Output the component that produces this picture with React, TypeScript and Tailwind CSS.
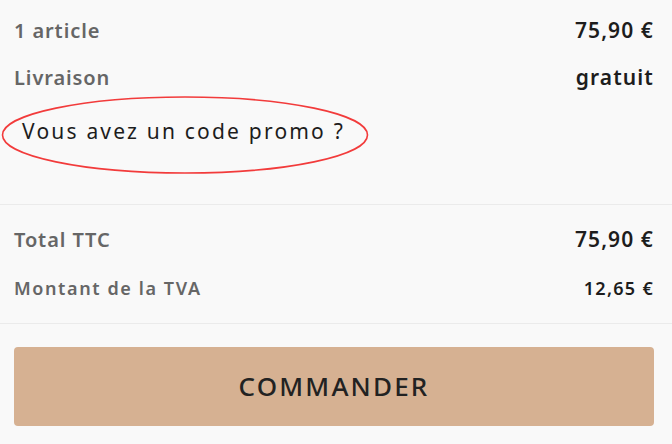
const font = { fontFamily: '"Noto Sans", "Open Sans", sans-serif' };

const Row = ({ label, value, small }: { label: string; value: string; small?: boolean }) => (
  <div className="flex h-[28px] items-center justify-between">
    <span
      className={`${small ? "text-[18px] tracking-[1.6px]" : "text-[20px] tracking-[0.9px]"} font-semibold text-[#666666]`}
    >
      {label}
    </span>
    <span
      className={`${small ? "text-[18px] tracking-[1.3px]" : "text-[21px] tracking-[1.1px]"} -mr-[1px] font-semibold text-[#1d1d1d]`}
    >
      {value}
    </span>
  </div>
);

export default function App() {
  return (
    <div className="h-[444px] w-[672px] bg-[#f9f9f9] overflow-hidden" style={font}>
      <div className="relative pl-[14px] pr-[19px] pt-[17px] pb-[58px] border-b border-[#ebebeb]">
        <div className="flex flex-col gap-[19px]">
          <Row label="1 article" value="75,90 €" />
          <Row label="Livraison" value="gratuit" />
        </div>
        <div className="mt-[26px] flex h-[28px] items-center pl-[8px] text-[21px] tracking-[2.2px] text-[#1d1d1d]">
          Vous avez un code promo ?
        </div>
        <svg className="absolute left-[1px] top-[96px]" width="368" height="80" viewBox="0 0 368 80">
          <ellipse cx="184" cy="39" rx="182.5" ry="38" fill="none" stroke="#f23b3b" strokeWidth="1.6" />
        </svg>
      </div>
      <div className="pl-[14px] pr-[19px] pt-[21px] pb-[21px] border-b border-[#ebebeb] flex flex-col gap-[20px]">
        <Row label="Total TTC" value="75,90 €" />
        <Row label="Montant de la TVA" value="12,65 €" small />
      </div>
      <div className="pl-[14px] pr-[18px] pt-[23px]">
        <button className="flex h-[79px] w-full items-center justify-center rounded-[4px] bg-[#d6b192] text-[26px] font-medium tracking-[2.2px] text-[#222222]">
          COMMANDER
        </button>
      </div>
    </div>
  );
}
